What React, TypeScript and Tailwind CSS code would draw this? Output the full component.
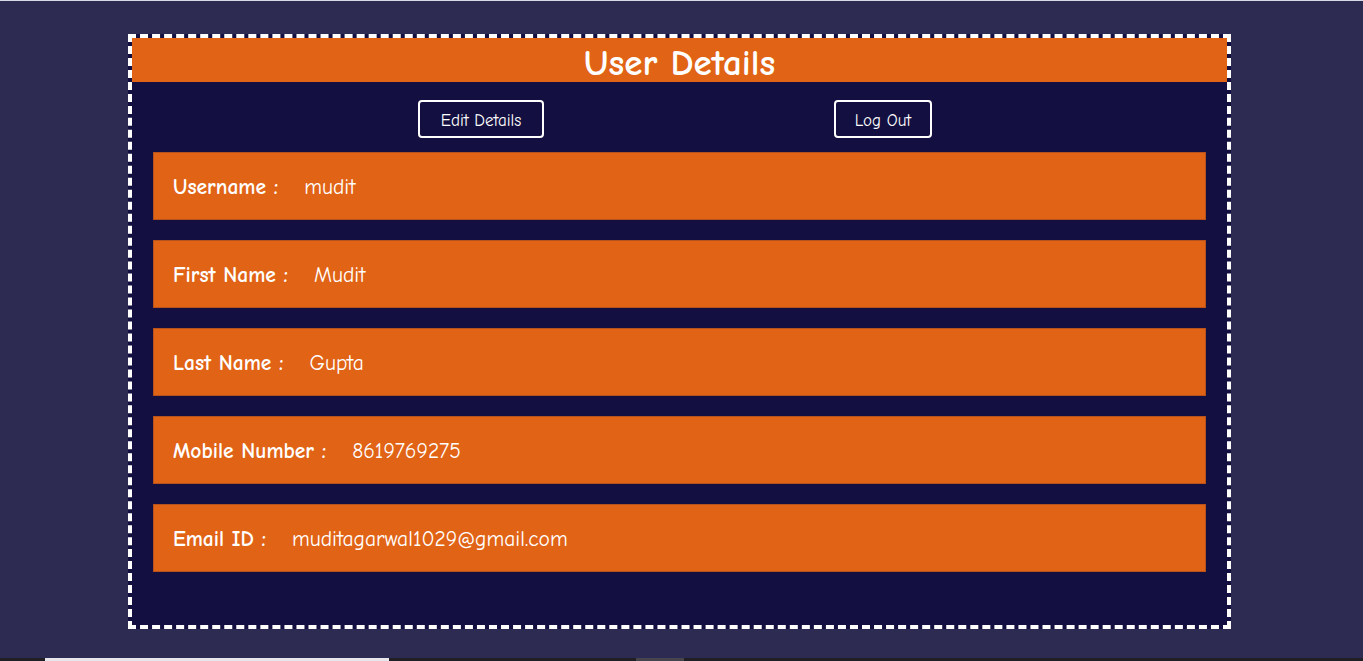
const details = [
  { label: "Username", value: "mudit" },
  { label: "First Name", value: "Mudit" },
  { label: "Last Name", value: "Gupta" },
  { label: "Mobile Number", value: "8619769275" },
  { label: "Email ID", value: "muditagarwal1029@gmail.com" },
];

const font = { fontFamily: '"Comic Sans MS", "Comic Neue", "Open Sans", sans-serif' };

export default function App() {
  return (
    <div className="h-[661px] flex flex-col bg-[#2d2b52] overflow-hidden" style={font}>
      <div className="h-px bg-[#d8d8e6]" />
      <div className="flex-1 pt-[33px]">
        <div className="ml-[128px] w-[1103px] border-4 border-dashed border-white bg-[#130f40]">
          <h1 className="h-[44px] bg-[#e16316] text-center text-[37px] font-bold leading-[50px] text-white">
            User Details
          </h1>

          <div className="ml-[148px] mt-[18px] grid w-[804px] grid-cols-2 justify-items-center">
            <button className="h-[38px] rounded border-2 border-white px-[21px] pt-[3px] text-[17px] text-white">
              Edit Details
            </button>
            <button className="h-[38px] rounded border-2 border-white px-[19px] pt-[3px] text-[17px] text-white">
              Log Out
            </button>
          </div>

          <div className="mt-[14px] flex flex-col gap-[20px] px-[21px] pb-[53px]">
            {details.map((d) => (
              <div
                key={d.label}
                className="flex h-[68px] items-center border border-[#b8521c] bg-[#e16316] px-[19px] pt-[3px] text-white"
              >
                <span className="text-[21.5px] font-bold">{d.label} :</span>
                <span className="ml-[26px] text-[21.5px]">{d.value}</span>
              </div>
            ))}
          </div>
        </div>
      </div>
      <div className="flex h-[3px] bg-[#1f1f26]">
        <div className="ml-[45px] w-[344px] bg-[#e6e6ea]" />
        <div className="ml-[247px] w-[48px] bg-[#45454d]" />
      </div>
    </div>
  );
}
